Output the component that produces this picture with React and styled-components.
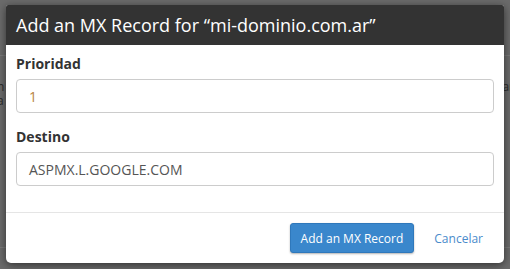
import React from "react";
import styled, { createGlobalStyle } from "styled-components";

const Global = createGlobalStyle`
  html, body { margin: 0; padding: 0; }
  body {
    width: 510px; height: 269px; overflow: hidden;
    background: #6b6b6b;
    font-family: "Open Sans", "Liberation Sans", sans-serif;
  }
  * { box-sizing: border-box; }
`;

const Stage = styled.div`
  position: relative;
  width: 510px;
  height: 269px;
  overflow: hidden;
`;

const BackPage = styled.div`
  display: flex;
  flex-direction: column;
  padding-top: 55px;
  color: #2b2b2b;
  font-size: 12px;
`;

const BackRule = styled.div`
  height: 1px;
  background: #7a7a7a;
  margin-top: ${(p) => p.$top || 0}px;
`;

const BackRow = styled.div`
  display: flex;
  justify-content: space-between;
  line-height: 12px;
  margin: ${(p) => p.$top || 0}px -4px 0 -3px;
`;

const Modal = styled.div`
  position: absolute;
  left: 6px;
  top: 5px;
  width: 498px;
  background: #fff;
  border-radius: 2px 2px 5px 5px;
  box-shadow: 0 2px 8px rgba(0, 0, 0, 0.55);
  display: flex;
  flex-direction: column;
  overflow: hidden;
`;

const Header = styled.div`
  height: 40px;
  background: #333;
  color: #fff;
  display: flex;
  align-items: center;
  padding: 0 10px 1px 10px;
  font-size: 18px;
`;

const Body = styled.div`
  display: flex;
  flex-direction: column;
  padding: 9px 10px 26px;
`;

const Group = styled.div`
  display: flex;
  flex-direction: column;
  gap: 5px;
  margin-bottom: ${(p) => (p.$last ? 0 : 14)}px;
`;

const Label = styled.label`
  font-size: 14px;
  font-weight: 700;
  line-height: 20px;
  color: #333;
`;

const Input = styled.div`
  height: 34px;
  border: 1px solid #ccc;
  border-radius: 4px;
  display: flex;
  align-items: center;
  padding: 0 12px;
  font-size: 14px;
  color: ${(p) => p.$color || "#555"};
`;

const Footer = styled.div`
  border-top: 1px solid #e5e5e5;
  display: flex;
  justify-content: flex-end;
  align-items: center;
  gap: 20px;
  padding: 10px 21px 10px 10px;
`;

const Button = styled.button`
  height: 30px;
  padding: 0 10px;
  background: #3a87cc;
  border: 1px solid #2f78bb;
  border-radius: 3px;
  color: #fff;
  font-family: inherit;
  font-size: 12px;
  box-shadow: 0 1px 2px rgba(0, 0, 0, 0.3);
`;

const Link = styled.a`
  color: #4a8bcb;
  font-size: 12px;
  text-decoration: none;
`;

export default function App() {
  return (
    <Stage>
      <Global />
      <BackPage>
        <BackRule />
        <BackRow $top={25}>
          <span>n</span>
          <span>ar</span>
        </BackRow>
        <BackRow $top={2}>
          <span>a</span>
          <span></span>
        </BackRow>
        <BackRule $top={140} />
      </BackPage>
      <Modal>
        <Header>Add an MX Record for “mi-dominio.com.ar”</Header>
        <Body>
          <Group>
            <Label>Prioridad</Label>
            <Input $color="#b8843f">1</Input>
          </Group>
          <Group $last>
            <Label>Destino</Label>
            <Input>ASPMX.L.GOOGLE.COM</Input>
          </Group>
        </Body>
        <Footer>
          <Button>Add an MX Record</Button>
          <Link href="#">Cancelar</Link>
        </Footer>
      </Modal>
    </Stage>
  );
}
